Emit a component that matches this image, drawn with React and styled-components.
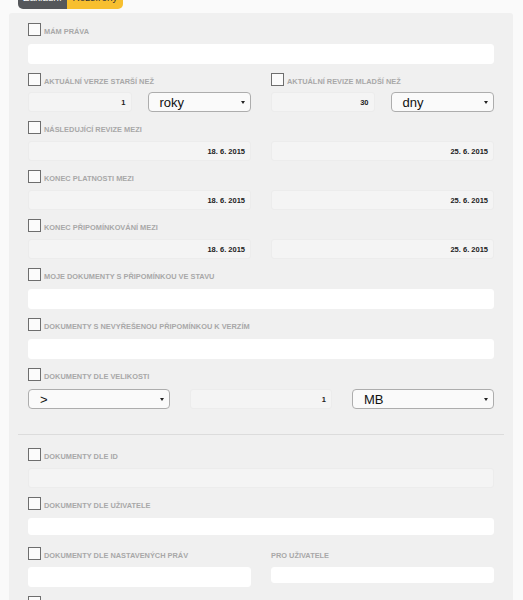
import React from "react";
import styled, { createGlobalStyle } from "styled-components";

const GlobalStyle = createGlobalStyle`
  html, body {
    margin: 0;
    padding: 0;
    background: #fafafa;
    font-family: "Liberation Sans", Arial, sans-serif;
  }
`;

const Page = styled.div`
  padding: 0 10px 0 9px;
  height: 600px;
  overflow: hidden;
`;

const Tabs = styled.div`
  display: flex;
  margin: -14px 0 4px 9px;
`;

const Tab = styled.div`
  height: 23px;
  width: ${(p) => (p.active ? 56 : 49)}px;
  display: flex;
  align-items: center;
  justify-content: center;
  font-size: 10px;
  background: ${(p) => (p.active ? "#f7bf2f" : "#55575b")};
  color: ${(p) => (p.active ? "#333" : "#fff")};
  border-radius: ${(p) => (p.active ? "0 0 5px 0" : "0 0 0 5px")};
`;

const Panel = styled.div`
  background: #f0f0f0;
  border-radius: 3px 3px 0 0;
  padding: 10px 19px 0;
  min-height: 600px;
`;

const Group = styled.div`
  display: flex;
  flex-direction: column;
  gap: ${(p) => p.gap ?? 8}px;
  padding-bottom: ${(p) => p.pb ?? 9}px;
`;

const Header = styled.label`
  display: flex;
  align-items: flex-end;
  gap: 3px;
  height: 13px;
`;

const Box = styled.span`
  width: 11px;
  height: 11px;
  border: 1px solid #6e6e6e;
  background: #fbfbfb;
  flex: none;
`;

const Label = styled.span`
  font-size: 7.4px;
  font-weight: bold;
  color: #a8a8a8;
  text-transform: uppercase;
  line-height: 7px;
  margin-bottom: 1px;
  white-space: nowrap;
`;

const Cols = styled.div`
  display: grid;
  grid-template-columns: ${(p) => p.cols || "1fr 1fr"};
  column-gap: ${(p) => p.gap ?? 20}px;
  align-items: start;
`;

const TextInput = styled.div`
  height: ${(p) => p.h || 20}px;
  box-sizing: border-box;
  border-radius: 3px;
  background: ${(p) => (p.readOnly ? "#f4f4f4" : "#ffffff")};
  border: 1px solid ${(p) => (p.readOnly ? "#ececec" : "#ffffff")};
  display: flex;
  align-items: center;
  justify-content: flex-end;
  padding: 0 5px;
  font-size: 7.5px;
  font-weight: bold;
  color: #222;
`;

const Select = styled.div`
  height: 20px;
  box-sizing: border-box;
  border: 1px solid #adadad;
  border-radius: 4px;
  background: #fafafa;
  display: flex;
  align-items: center;
  justify-content: space-between;
  padding: 0 5px 0 11px;
  font-size: 13px;
  color: #111;
`;

const Caret = styled.span`
  width: 0;
  height: 0;
  border-left: 2px solid transparent;
  border-right: 2px solid transparent;
  border-top: 3px solid #222;
`;

const Divider = styled.hr`
  border: 0;
  border-top: 1px solid #dcdcdc;
  margin: 25px -10px 13px;
`;

const PlainLabel = styled.div`
  height: 11px;
  margin-top: 2px;
  display: flex;
  align-items: flex-end;
  font-size: 7.4px;
  font-weight: bold;
  color: #a8a8a8;
  text-transform: uppercase;
`;

const Check = ({ children }) => (
  <Header>
    <Box />
    {children && <Label>{children}</Label>}
  </Header>
);

const Dropdown = ({ children }) => (
  <Select>
    <span>{children}</span>
    <Caret />
  </Select>
);

const DateRange = ({ label, from, to }) => (
  <Group gap={7}>
    <Check>{label}</Check>
    <Cols>
      <TextInput readOnly>{from}</TextInput>
      <TextInput readOnly>{to}</TextInput>
    </Cols>
  </Group>
);

export default function App() {
  return (
    <Page>
      <GlobalStyle />
      <Tabs>
        <Tab>Základní</Tab>
        <Tab active>Rozšířený</Tab>
      </Tabs>
      <Panel>
        <Group>
          <Check>Mám práva</Check>
          <TextInput />
        </Group>

        <Cols>
          <Group gap={6}>
            <Check>Aktuální verze starší než</Check>
            <Cols gap={16}>
              <TextInput readOnly>1</TextInput>
              <Dropdown>roky</Dropdown>
            </Cols>
          </Group>
          <Group gap={6}>
            <Check>Aktuální revize mladší než</Check>
            <Cols gap={16}>
              <TextInput readOnly>30</TextInput>
              <Dropdown>dny</Dropdown>
            </Cols>
          </Group>
        </Cols>

        <DateRange label="Následující revize mezi" from="18. 6. 2015" to="25. 6. 2015" />
        <DateRange label="Konec platnosti mezi" from="18. 6. 2015" to="25. 6. 2015" />
        <DateRange label="Konec připomínkování mezi" from="18. 6. 2015" to="25. 6. 2015" />

        <Group>
          <Check>Moje dokumenty s připomínkou ve stavu</Check>
          <TextInput />
        </Group>

        <Group>
          <Check>Dokumenty s nevyřešenou připomínkou k verzím</Check>
          <TextInput />
        </Group>

        <Group pb={0}>
          <Check>Dokumenty dle velikosti</Check>
          <Cols cols="1fr 1fr 1fr">
            <Dropdown>&gt;</Dropdown>
            <TextInput readOnly>1</TextInput>
            <Dropdown>MB</Dropdown>
          </Cols>
        </Group>

        <Divider />

        <Group gap={7}>
          <Check>Dokumenty dle ID</Check>
          <TextInput readOnly />
        </Group>

        <Group pb={12}>
          <Check>Dokumenty dle uživatele</Check>
          <TextInput h={17} />
        </Group>

        <Cols>
          <Group gap={7}>
            <Check>Dokumenty dle nastavených práv</Check>
            <TextInput />
          </Group>
          <Group gap={7}>
            <PlainLabel>Pro uživatele</PlainLabel>
            <TextInput h={16} />
          </Group>
        </Cols>

        <Group>
          <Check />
          <TextInput />
        </Group>
      </Panel>
    </Page>
  );
}
